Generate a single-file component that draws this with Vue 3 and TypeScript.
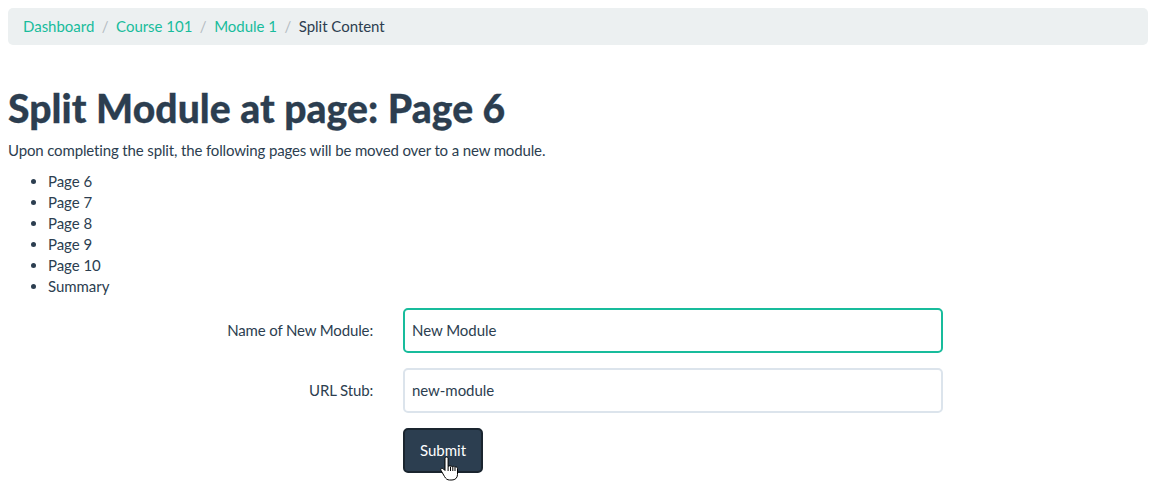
<script setup lang="ts">
const crumbs: string[] = ['Dashboard', 'Course 101', 'Module 1'];
const pages: string[] = ['Page 6', 'Page 7', 'Page 8', 'Page 9', 'Page 10', 'Summary'];
</script>

<template>
  <div class="page">
    <nav class="crumbs">
      <template v-for="c in crumbs" :key="c">
        <a class="link">{{ c }}</a><span class="sep">/</span>
      </template>
      <span>Split Content</span>
    </nav>
    <h1>Split Module at page: Page 6</h1>
    <p>Upon completing the split, the following pages will be moved over to a new module.</p>
    <ul>
      <li v-for="p in pages" :key="p">{{ p }}</li>
    </ul>
    <form class="form" @submit.prevent>
      <label>Name of New Module:</label>
      <input class="input focus" value="New Module" />
      <label>URL Stub:</label>
      <input class="input" value="new-module" />
      <span></span>
      <div class="btnwrap">
        <button class="btn" type="button">Submit</button>
        <svg class="cursor" width="20" height="25" viewBox="0 0 20 25">
          <path d="M6.500 1C5.500 1 5 1.800 5 2.800V14.500L3.500 13C2.600 12.200 1.500 12.200 1 12.800C.6 13.300.7 14 1.100 14.600L4.500 20.500C5.800 22.800 7.300 24 9.500 24H12C15 24 17.500 22 17.500 18.500V12.500C17.500 11.500 16.800 11 16 11C15.500 11 15.100 11.200 14.800 11.500C14.600 10.700 14 10.300 13.300 10.300C12.800 10.300 12.400 10.500 12.100 10.800C11.800 10.100 11.200 9.700 10.500 9.700C10 9.700 9.500 9.900 8.100 10.300V2.800C8.100 1.800 7.500 1 6.500 1Z" fill="#fff" stroke="#000" stroke-width="1" stroke-linejoin="round"/>
          <path d="M8.100 10.300V15M10.500 10.500V15M12.800 11V15M15 12V15" stroke="#000" stroke-width="1" fill="none"/>
        </svg>
      </div>
    </form>
  </div>
</template>

<style scoped>
.page {
  padding: 8px;
  box-sizing: border-box;
  width: 1156px;
  height: 488px;
  overflow: hidden;
  font-family: Lato, sans-serif;
  font-size: 15px;
  line-height: 21px;
  letter-spacing: -0.14px;
  color: #2c3e50;
}
.crumbs {
  background: #ecf0f1;
  border-radius: 5px;
  height: 37px;
  padding: 8px 15px;
  box-sizing: border-box;
  display: flex;
  letter-spacing: -0.02px;
}
.link { color: #18bc9c; }
.sep { color: #b4bcc2; padding: 0 7.5px; }
h1 {
  margin: 40px 0 8px;
  font-size: 39px;
  line-height: 47px;
  font-weight: 900;
  letter-spacing: 0.1px;
  -webkit-text-stroke: 0.3px #2c3e50;
}
p { margin: 0 0 10px; }
ul { margin: 0 0 11px; padding-left: 40px; letter-spacing: -0.05px; }
.form {
  display: grid;
  grid-template-columns: 365px 540px;
  column-gap: 30px;
  row-gap: 15px;
  align-items: start;
}
label { text-align: right; padding-top: 12px; }
.input {
  box-sizing: border-box;
  height: 45px;
  width: 540px;
  border: 2px solid #dce4ec;
  border-radius: 5px;
  padding: 0 7px 2px;
  font: inherit;
  letter-spacing: -0.05px;
  color: #2c3e50;
  outline: none;
  background: #fff;
}
.focus { border-color: #18bc9c; }
.btnwrap { position: relative; width: 80px; }
.btn {
  width: 80px;
  height: 45px;
  background: #2c3e50;
  border: 2px solid #1a252f;
  border-radius: 5px;
  color: #fff;
  font: inherit;
  letter-spacing: 0;
  padding: 0;
}
.cursor { position: absolute; left: 37px; top: 28px; }
</style>
